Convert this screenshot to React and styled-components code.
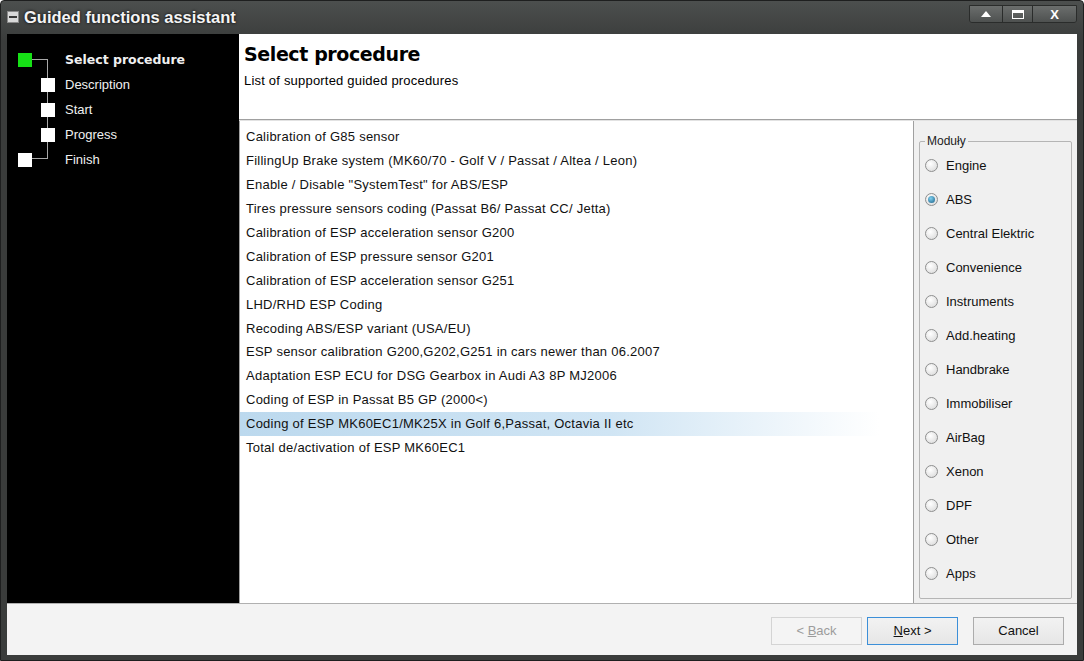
import React from "react";
import styled, { createGlobalStyle } from "styled-components";

const Global = createGlobalStyle`
  html, body { margin: 0; padding: 0; background: #fff; }
  * { box-sizing: border-box; }
`;

const Window = styled.div`
  width: 1084px;
  height: 661px;
  display: flex;
  flex-direction: column;
  background: linear-gradient(#4c4f4e, #3a3c3b 40px, #3a3c3b);
  padding: 0 6px 5px 6px;
  font-family: "Liberation Sans", Arial, sans-serif;
  border: 1px solid #1e1f1f;
  border-radius: 4px 4px 0 0;
`;

const TitleBar = styled.div`
  height: 33px;
  display: flex;
  align-items: center;
  gap: 5px;
  flex: none;
  padding-bottom: 1px;
`;

const TitleIcon = styled.div`
  width: 12px;
  height: 12px;
  background: #d9d9d9;
  border: 1px solid #8a8a8a;
  display: flex;
  align-items: center;
  justify-content: center;
  &::after {
    content: "";
    width: 8px;
    height: 2px;
    background: #3a3a3a;
  }
`;

const TitleText = styled.div`
  color: #f4f4f4;
  font-weight: bold;
  font-size: 16.5px;
  text-shadow: 0 0 3px #000;
  flex: 1;
`;

const WinControls = styled.div`
  display: flex;
  align-self: flex-start;
  margin-top: 4px;
  border: 1px solid #2a2c2b;
  border-radius: 0 0 3px 3px;
  overflow: hidden;
`;

const WinBtn = styled.div`
  width: ${({ w }) => w}px;
  height: 16px;
  background: linear-gradient(#6b6e6d, #4e5150);
  border-left: ${({ first }) => (first ? "none" : "1px solid #2a2c2b")};
  display: flex;
  align-items: center;
  justify-content: center;
  color: #fff;
  font-weight: bold;
  font-size: 13px;
`;

const Body = styled.div`
  flex: 1;
  display: flex;
  min-height: 0;
`;

const Sidebar = styled.div`
  width: 232px;
  background: #000;
  padding-top: 13px;
  flex: none;
`;

const Steps = styled.div`
  position: relative;
  padding-left: 11px;
`;

const Step = styled.div`
  height: 25px;
  display: flex;
  align-items: center;
  position: relative;
`;

const Box = styled.div`
  width: 14px;
  height: 14px;
  background: ${({ active }) => (active ? "#16e016" : "#fff")};
  margin-left: ${({ inner }) => (inner ? "23px" : "0")};
  flex: none;
`;

const StepLabel = styled.div`
  color: #f0f0f0;
  position: absolute;
  left: 47px;
  font-weight: ${({ active }) => (active ? "bold" : "normal")};
  font-family: ${({ active }) => (active ? '"DejaVu Sans", sans-serif' : '"Liberation Sans", Arial, sans-serif')};
  font-size: ${({ active }) => (active ? "12.5px" : "13px")};
`;

const Connector = styled.div`
  position: absolute;
  left: 25px;
  top: 12px;
  width: 16px;
  height: 100px;
  border-top: 1px solid #a8a8a8;
  border-right: 1px solid #a8a8a8;
  border-bottom: 1px solid #a8a8a8;
`;

const Main = styled.div`
  flex: 1;
  display: flex;
  flex-direction: column;
  background: #fff;
  min-width: 0;
`;

const Header = styled.div`
  height: 86px;
  padding: 9px 5px;
  border-bottom: 1px solid #a0a0a0;
  flex: none;
`;

const Heading = styled.div`
  font-family: "DejaVu Sans", sans-serif;
  font-weight: bold;
  font-size: 19px;
  color: #000;
  letter-spacing: -0.4px;
`;

const Subtitle = styled.div`
  font-size: 13px;
  letter-spacing: 0.2px;
  color: #000;
  margin-top: 8px;
`;

const Content = styled.div`
  flex: 1;
  display: flex;
  min-height: 0;
  border-top: 1px solid #e2e2e2;
`;

const List = styled.div`
  flex: 1;
  border-left: 1px solid #a0a0a0;
  border-right: 1px solid #a0a0a0;
  padding-top: 4px;
`;

const Row = styled.div`
  height: 23.9px;
  display: flex;
  align-items: center;
  padding-left: 6px;
  font-size: 13px;
  letter-spacing: 0.25px;
  color: #111;
  background: ${({ selected }) =>
    selected ? "linear-gradient(90deg, #bcd9ee 0%, #d0e5f4 55%, #ffffff 95%)" : "transparent"};
`;

const Side = styled.div`
  width: 163px;
  flex: none;
  background: #f0f0f0;
  padding: 13px 5px 4px 5px;
  display: flex;
`;

const Group = styled.fieldset`
  flex: 1;
  margin: 0;
  border: 1px solid #b5b5b5;
  border-radius: 2px;
  padding: 0 0 0 5px;
  display: flex;
  flex-direction: column;
`;

const Legend = styled.legend`
  font-size: 12px;
  color: #222;
  padding: 0 2px;
  margin-left: 0;
`;

const RadioRow = styled.div`
  height: 34px;
  display: flex;
  align-items: center;
  gap: 8px;
  font-size: 13px;
  color: #111;
`;

const Radio = styled.div`
  width: 13px;
  height: 13px;
  border-radius: 50%;
  border: 1px solid #8e8f8f;
  background: radial-gradient(circle at 40% 35%, #ffffff, #d6d6d6);
  display: flex;
  align-items: center;
  justify-content: center;
  &::after {
    content: "";
    display: ${({ checked }) => (checked ? "block" : "none")};
    width: 7px;
    height: 7px;
    border-radius: 50%;
    background: radial-gradient(circle at 40% 35%, #7fd0f0, #1b5f86);
  }
`;

const Footer = styled.div`
  height: 52px;
  flex: none;
  background: #f3f3f3;
  border-top: 1px solid #b0b0b0;
  display: flex;
  align-items: center;
  justify-content: flex-end;
  padding-right: 13px;
  gap: 5px;
  padding-top: 2px;
`;

const Button = styled.div`
  width: ${({ w }) => w || 91}px;
  height: 28px;
  border: 1px solid ${({ primary, disabled }) => (primary ? "#3c8fd8" : disabled ? "#d4d4d4" : "#acacac")};
  background: ${({ disabled }) => (disabled ? "#f4f4f4" : "linear-gradient(#f2f2f2, #e6e6e6)")};
  color: ${({ disabled }) => (disabled ? "#9c9c9c" : "#111")};
  font-size: 13px;
  display: flex;
  align-items: center;
  justify-content: center;
  margin-left: ${({ gapLeft }) => gapLeft || 0}px;
  & u { text-decoration: underline; }
`;

const procedures = [
  "Calibration of G85 sensor",
  "FillingUp Brake system (MK60/70 - Golf V / Passat / Altea / Leon)",
  'Enable / Disable "SystemTest" for ABS/ESP',
  "Tires pressure sensors coding (Passat B6/ Passat CC/ Jetta)",
  "Calibration of ESP acceleration sensor G200",
  "Calibration of ESP pressure sensor G201",
  "Calibration of ESP acceleration sensor G251",
  "LHD/RHD ESP Coding",
  "Recoding ABS/ESP variant (USA/EU)",
  "ESP sensor calibration G200,G202,G251 in cars newer than 06.2007",
  "Adaptation ESP ECU for DSG Gearbox in Audi A3 8P MJ2006",
  "Coding of ESP in Passat B5 GP (2000<)",
  "Coding of ESP MK60EC1/MK25X in Golf 6,Passat, Octavia II etc",
  "Total de/activation of ESP MK60EC1",
];

const modules = [
  "Engine",
  "ABS",
  "Central Elektric",
  "Convenience",
  "Instruments",
  "Add.heating",
  "Handbrake",
  "Immobiliser",
  "AirBag",
  "Xenon",
  "DPF",
  "Other",
  "Apps",
];

const steps = ["Select procedure", "Description", "Start", "Progress", "Finish"];

export default function App() {
  return (
    <>
      <Global />
      <Window>
        <TitleBar>
          <TitleIcon />
          <TitleText>Guided functions assistant</TitleText>
          <WinControls>
            <WinBtn w={32} first>
              <svg width="10" height="6" viewBox="0 0 10 6">
                <path d="M0 6 L5 0 L10 6 Z" fill="#fff" />
              </svg>
            </WinBtn>
            <WinBtn w={30}>
              <svg width="12" height="9" viewBox="0 0 12 9">
                <rect x="0.5" y="0.5" width="11" height="8" fill="none" stroke="#fff" />
                <rect x="0" y="0" width="12" height="3" fill="#fff" />
              </svg>
            </WinBtn>
            <WinBtn w={44}>X</WinBtn>
          </WinControls>
        </TitleBar>
        <Body>
          <Sidebar>
            <Steps>
              <Connector />
              {steps.map((s, i) => (
                <Step key={s}>
                  <Box active={i === 0} inner={i > 0 && i < 4} />
                  <StepLabel active={i === 0}>{s}</StepLabel>
                </Step>
              ))}
            </Steps>
          </Sidebar>
          <Main>
            <Header>
              <Heading>Select procedure</Heading>
              <Subtitle>List of supported guided procedures</Subtitle>
            </Header>
            <Content>
              <List>
                {procedures.map((p, i) => (
                  <Row key={p} selected={i === 12}>
                    {p}
                  </Row>
                ))}
              </List>
              <Side>
                <Group>
                  <Legend>Moduły</Legend>
                  {modules.map((m) => (
                    <RadioRow key={m}>
                      <Radio checked={m === "ABS"} />
                      {m}
                    </RadioRow>
                  ))}
                </Group>
              </Side>
            </Content>
          </Main>
        </Body>
        <Footer>
          <Button disabled>
            &lt;&nbsp;<u>B</u>ack
          </Button>
          <Button primary>
            <u>N</u>ext &gt;
          </Button>
          <Button gapLeft={10}>Cancel</Button>
        </Footer>
      </Window>
    </>
  );
}
